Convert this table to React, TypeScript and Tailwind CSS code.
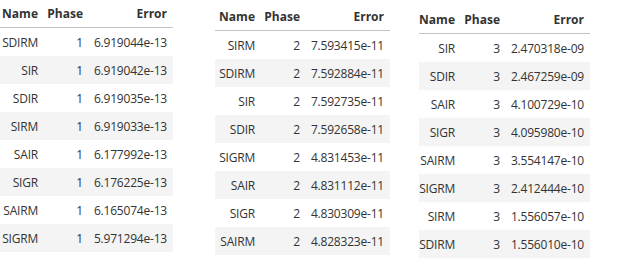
import React from 'react';

type Row = [string, number, string];

const tables: { rows: Row[]; cols: string; offset: string; gap: string }[] = [
  {
    cols: 'grid-cols-[44px_45px_84px]',
    offset: 'mt-0',
    gap: 'ml-0',
    rows: [
      ['SDIRM', 1, '6.919044e-13'],
      ['SIR', 1, '6.919042e-13'],
      ['SDIR', 1, '6.919035e-13'],
      ['SIRM', 1, '6.919033e-13'],
      ['SAIR', 1, '6.177992e-13'],
      ['SIGR', 1, '6.176225e-13'],
      ['SAIRM', 1, '6.165074e-13'],
      ['SIGRM', 1, '5.971294e-13'],
    ],
  },
  {
    cols: 'grid-cols-[46px_45px_84px]',
    offset: 'mt-[3px]',
    gap: 'ml-[42px]',
    rows: [
      ['SIRM', 2, '7.593415e-11'],
      ['SDIRM', 2, '7.592884e-11'],
      ['SIR', 2, '7.592735e-11'],
      ['SDIR', 2, '7.592658e-11'],
      ['SIGRM', 2, '4.831453e-11'],
      ['SAIR', 2, '4.831112e-11'],
      ['SIGR', 2, '4.830309e-11'],
      ['SAIRM', 2, '4.828323e-11'],
    ],
  },
  {
    cols: 'grid-cols-[42px_45px_84px]',
    offset: 'mt-[6px]',
    gap: 'ml-[29px]',
    rows: [
      ['SIR', 3, '2.470318e-09'],
      ['SDIR', 3, '2.467259e-09'],
      ['SAIR', 3, '4.100729e-10'],
      ['SIGR', 3, '4.095980e-10'],
      ['SAIRM', 3, '3.554147e-10'],
      ['SIGRM', 3, '2.412444e-10'],
      ['SIRM', 3, '1.556057e-10'],
      ['SDIRM', 3, '1.556010e-10'],
    ],
  },
];

const ResultTable: React.FC<{ rows: Row[]; cols: string; className: string }> = ({ rows, cols, className }) => (
  <div className={className}>
    <div className={`grid ${cols} h-[28px] border-b border-[#c4c4c4] font-bold`}>
      <div className="flex items-center justify-end pr-[6px]">Name</div>
      <div className="flex items-center justify-end pr-[6px]">Phase</div>
      <div className="flex items-center justify-end pr-[6px]">Error</div>
    </div>
    {rows.map(([name, phase, err], i) => (
      <div key={name} className={`grid ${cols} h-[28px] pt-[1px] tracking-[-0.2px] ${i % 2 === 1 ? 'bg-[#f4f4f4]' : 'bg-white'}`}>
        <div className="flex items-center justify-end pr-[6px]">{name}</div>
        <div className="flex items-center justify-end pr-[6px]">{phase}</div>
        <div className="flex items-center justify-end pr-[6px]">{err}</div>
      </div>
    ))}
  </div>
);

export default function App() {
  return (
    <div className="w-[621px] h-[273px] bg-white text-[#333] text-[12px] leading-none font-['Open_Sans',sans-serif] flex items-start">
      {tables.map((t, i) => (
        <ResultTable key={i} rows={t.rows} cols={t.cols} className={`${t.offset} ${t.gap}`} />
      ))}
    </div>
  );
}
